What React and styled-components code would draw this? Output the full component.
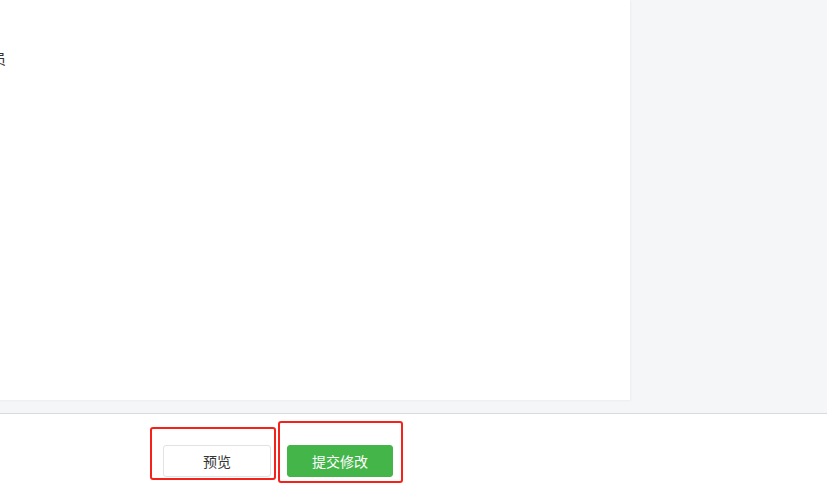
import React from 'react';
import styled, { createGlobalStyle } from 'styled-components';

const Global = createGlobalStyle`
  html, body { margin: 0; padding: 0; }
  body {
    background: #f5f6f7;
    font-family: "Noto Sans CJK SC", "Liberation Sans", sans-serif;
    overflow: hidden;
  }
`;

const Page = styled.div`
  width: 827px;
  height: 500px;
  display: flex;
  flex-direction: column;
  overflow: hidden;
`;

const Main = styled.div`
  height: 413px;
  display: flex;
  align-items: flex-start;
  overflow: hidden;
`;

const Panel = styled.div`
  margin-left: -94px;
  width: 724px;
  height: 400px;
  background: #fff;
  box-shadow: 1px 1px 2px rgba(0, 0, 0, 0.04);
  padding-top: 48px;
  box-sizing: border-box;
`;

const FormRow = styled.div`
  display: grid;
  grid-template-columns: 100px 1fr;
`;

const Label = styled.div`
  text-align: right;
  font-size: 14px;
  line-height: 20px;
  color: #353535;
`;

const Footer = styled.div`
  flex: 1;
  background: #fff;
  border-top: 1px solid #d9dadc;
  display: flex;
  align-items: flex-start;
  padding-left: 150px;
  gap: 2px;
`;

const Mark = styled.div`
  border: 2px solid #f5211b;
  border-radius: 3px;
  margin-top: ${p => p.top}px;
  padding: ${p => p.pad};
  display: flex;
`;

const Button = styled.button`
  height: 32px;
  font-family: inherit;
  font-size: 14px;
  border-radius: 3px;
  cursor: pointer;
  padding: 0;
  ${p => p.primary ? `
    width: 106px;
    background: #44b549;
    border: 1px solid #44b549;
    color: #fff;
  ` : `
    width: 108px;
    background: #fff;
    border: 1px solid #e2e2e2;
    color: #353535;
  `}
`;

export default function App() {
  return (
    <Page>
      <Global />
      <Main>
        <Panel>
          <FormRow>
            <Label>成员</Label>
            <div />
          </FormRow>
        </Panel>
      </Main>
      <Footer>
        <Mark top={13} pad="16px 3px 1px 11px">
          <Button>预览</Button>
        </Mark>
        <Mark top={7} pad="22px 8px 4px 7px">
          <Button primary>提交修改</Button>
        </Mark>
      </Footer>
    </Page>
  );
}
